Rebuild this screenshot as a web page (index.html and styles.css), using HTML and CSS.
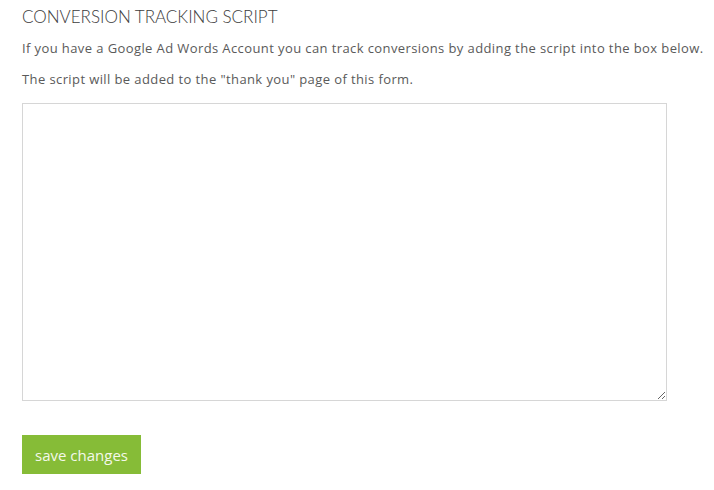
FILE: index.html
```html
<!DOCTYPE html>
<html lang="en">
<head>
  <meta charset="UTF-8">
  <title>Conversion Tracking Script</title>
  <link rel="stylesheet" href="styles.css">
</head>
<body>

  <div class="section">
    <h2 class="section-title">Conversion Tracking Script</h2>
    <p class="note">If you have a Google Ad Words Account you can track conversions by adding the script into the box below.</p>
    <p class="note">The script will be added to the "thank you" page of this form.</p>

    <textarea class="script-box" id="trackingScript"></textarea>

    <button class="save-btn" id="saveButton">save changes</button>
  </div>

</body>
</html>
```

FILE: styles.css
```css
body {
  margin: 0;
  padding: 0;
  font-family: 'Open Sans', 'Lato', sans-serif;
  background-color: #fff;
  color: #555;
}

.section {
  display: flex;
  flex-direction: column;
  align-items: flex-start;
  padding: 6px 22px 0 22px;
}

.section-title {
  margin: 0;
  font-family: 'Lato', sans-serif;
  font-size: 17px;
  font-weight: 300;
  text-transform: uppercase;
  color: #3c3c3c;
  line-height: 22px;
}

.note {
  margin: 9px 0 0 0;
  font-size: 13px;
  letter-spacing: 0.4px;
  line-height: 22px;
  color: #5a5a5a;
  white-space: nowrap;
}

.script-box {
  margin-top: 13px;
  width: 645px;
  height: 298px;
  box-sizing: border-box;
  border: 1px solid #d6d6d6;
  padding: 6px;
  font-family: 'Liberation Mono', monospace;
  font-size: 13px;
  resize: vertical;
  outline: none;
}

.script-box:focus {
  border-color: #86bc37;
}

.save-btn {
  margin-top: 34px;
  width: 119px;
  height: 39px;
  border: none;
  background-color: #86bc37;
  color: #f4f8ea;
  font-family: 'Open Sans', sans-serif;
  font-size: 15px;
  cursor: pointer;
  padding: 0;
}

.save-btn:hover {
  background-color: #76a92c;
}
```
